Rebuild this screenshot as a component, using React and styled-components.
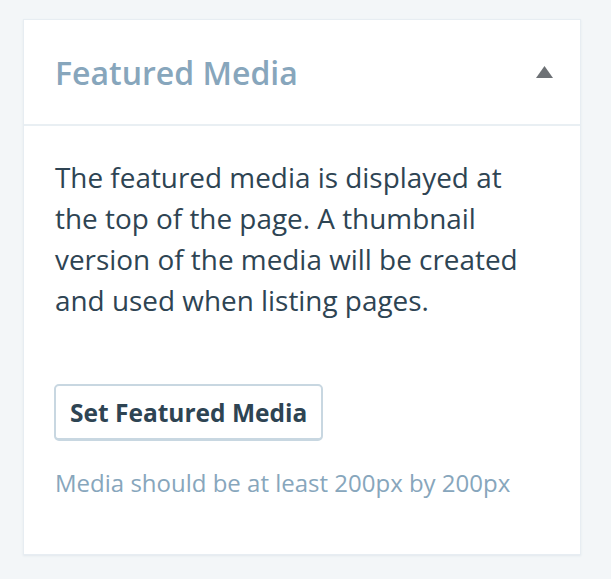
import React from 'react';
import styled, { createGlobalStyle } from 'styled-components';

const GlobalStyle = createGlobalStyle`
    html, body {
        margin: 0;
        padding: 0;
        background: #f3f6f8;
        font-family: 'Open Sans', 'Noto Sans', sans-serif;
    }
`;

const Page = styled.div`
    padding: 19px 30px 24px 23px;
`;

const Card = styled.section`
    width: 558px;
    box-sizing: border-box;
    background: #fff;
    border: 1px solid #e7edf2;
    box-shadow: 0 1px 2px #e2e8ed;
`;

const Header = styled.header`
    height: 106px;
    box-sizing: border-box;
    display: flex;
    align-items: center;
    justify-content: space-between;
    padding: 0 27px 0 31px;
    border-bottom: 2px solid #e9eff3;
`;

const Title = styled.h2`
    margin: 0;
    font-size: 32px;
    font-weight: 600;
    color: #87a6bc;
`;

const Toggle = styled.button`
    border: 0;
    background: none;
    padding: 0;
    display: flex;
    cursor: pointer;
`;

const Body = styled.div`
    padding: 31px 31px 54px 30px;
`;

const Text = styled.p`
    margin: 0 0 63px 1px;
    max-width: 480px;
    font-size: 27.9px;
    line-height: 41px;
    color: #2e4453;
`;

const Button = styled.button`
    font-family: inherit;
    font-size: 24.5px;
    font-weight: 700;
    color: #2e4453;
    background: #fff;
    border: 2px solid #c8d7e1;
    border-bottom-width: 3px;
    border-radius: 5px;
    padding: 0 14px;
    height: 57px;
    cursor: pointer;
`;

const Help = styled.p`
    margin: 25px 0 0 1px;
    font-size: 24px;
    line-height: 34px;
    color: #87a6bc;
`;

const App = () => {
    return (
        <>
            <GlobalStyle />
            <Page>
                <Card>
                    <Header>
                        <Title>Featured Media</Title>
                        <Toggle aria-label="Collapse">
                            <svg width="17" height="12" viewBox="0 0 17 12">
                                <path d="M8.5 0 L17 12 L0 12 Z" fill="#6d7175" />
                            </svg>
                        </Toggle>
                    </Header>
                    <Body>
                        <Text>
                            The featured media is displayed at the top of the page. A thumbnail
                            version of the media will be created and used when listing pages.
                        </Text>
                        <Button>Set Featured Media</Button>
                        <Help>Media should be at least 200px by 200px</Help>
                    </Body>
                </Card>
            </Page>
        </>
    );
};

export default App;
